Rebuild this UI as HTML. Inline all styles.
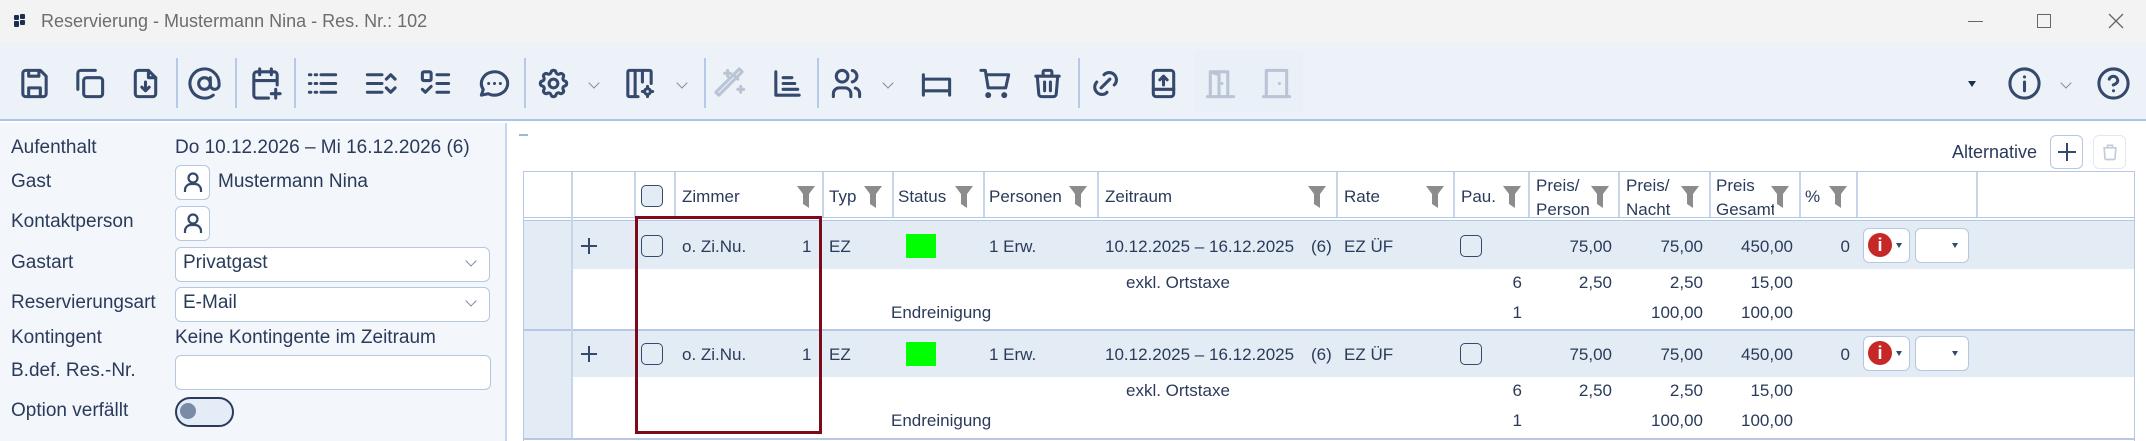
<!DOCTYPE html>
<html><head><meta charset="utf-8">
<style>
*{margin:0;padding:0;box-sizing:border-box}
body{width:2146px;height:441px;overflow:hidden;background:#fff;font-family:"Liberation Sans",sans-serif;color:#2a3b5a;position:relative}
.a{position:absolute}
.t{position:absolute;white-space:nowrap}
svg.i{position:absolute;width:35px;height:35px;top:66px;margin-left:-2px;fill:none;stroke:#34496b;stroke-width:2.1;stroke-linecap:round;stroke-linejoin:round}
svg.d{stroke:#b9c4d4}
.sep{position:absolute;top:58px;width:2px;height:50px;background:#b4cae6}
.chev{position:absolute;top:79px;width:8px;height:8px;border-right:1.3px solid #7b8aa3;border-bottom:1.3px solid #7b8aa3;transform:rotate(45deg)}
.lbl{position:absolute;left:11px;font-size:19px;color:#2a3b5a;white-space:nowrap}
.box{position:absolute;background:#fff;border:1.5px solid #b6c7e0;border-radius:6px}
.td{position:absolute;font-size:17px;white-space:nowrap;color:#2a3b5a}
.r{text-align:right}
.vl{position:absolute;width:1.5px;background:#c6d5ea}
.cb{position:absolute;width:22px;height:22px;border:1.6px solid #34496b;border-radius:5px}
.fl{position:absolute;top:186px;width:18px;height:22px}
</style></head><body>
<div class="a" style="left:0;top:0;width:2146px;height:42px;background:#f3f3f3"></div>
<div class="a" style="left:14px;top:15px;width:5px;height:5px;background:#1c2f4f;border-radius:1px"></div>
<div class="a" style="left:20px;top:14px;width:5px;height:5px;background:#1c2f4f;border-radius:1px"></div>
<div class="a" style="left:14px;top:21px;width:5px;height:6px;background:#1c2f4f;border-radius:1px"></div>
<div class="a" style="left:20px;top:20px;width:5px;height:5px;background:#1c2f4f;border-radius:1px"></div>
<div class="t" style="left:41px;top:11px;font-size:18px;color:#6d6d6d">Reservierung - Mustermann Nina - Res. Nr.: 102</div>
<div class="a" style="left:1968px;top:21px;width:15px;height:1.2px;background:#666"></div>
<div class="a" style="left:2037px;top:14px;width:14px;height:14px;border:1.3px solid #666"></div>
<svg class="a" style="left:2108px;top:13px" width="16" height="16"><path d="M1 1L15 15M15 1L1 15" stroke="#666" stroke-width="1.3"/></svg>
<div class="a" style="left:0;top:42px;width:2146px;height:79px;background:#edf2f9;border-bottom:2px solid #aac4e6"></div>
<div class="a" style="left:1195px;top:50px;width:108px;height:62px;background:#eaf0f7"></div>
<svg class="i" viewBox="0 0 24 24" style="left:19px"><path d="M4 5a2 2 0 0 1 2-2h10l4 4v12a2 2 0 0 1-2 2H6a2 2 0 0 1-2-2z"/><path d="M8 3v4h7V3M8 21v-6h8v6"/></svg>
<svg class="i" viewBox="0 0 24 24" style="left:74px"><rect x="8" y="8" width="13" height="13" rx="2"/><path d="M4 16V5a2 2 0 0 1 2-2h10"/></svg>
<svg class="i" viewBox="0 0 24 24" style="left:130px"><path d="M14 3H7a2 2 0 0 0-2 2v14a2 2 0 0 0 2 2h10a2 2 0 0 0 2-2V8z"/><path d="M14 3v5h5M12 11v6M9.5 14.5L12 17l2.5-2.5"/></svg>
<div class="sep" style="left:176px"></div>
<svg class="i" viewBox="0 0 24 24" style="left:189px"><circle cx="12" cy="12" r="4"/><path d="M16 8v5a3 3 0 0 0 6 0v-1a10 10 0 1 0-4 8"/></svg>
<div class="sep" style="left:235px"></div>
<svg class="i" viewBox="0 0 24 24" style="left:250px"><path d="M20 13V6a2 2 0 0 0-2-2H6a2 2 0 0 0-2 2v14a2 2 0 0 0 2 2h8M4 10h16M8 2v4M16 2v4M19 16v6M16 19h6"/></svg>
<div class="sep" style="left:294px"></div>
<svg class="i" viewBox="0 0 24 24" style="left:307px"><path d="M3 6h1M7 6h1M11 6h10M3 12h1M7 12h1M11 12h10M3 18h1M7 18h1M11 18h10"/></svg>
<svg class="i" viewBox="0 0 24 24" style="left:365px"><path d="M3 6h10M3 12h10M3 18h10M16 9l3-3 3 3M16 15l3 3 3-3"/></svg>
<svg class="i" viewBox="0 0 24 24" style="left:420px"><rect x="3" y="4" width="6" height="6" rx="1"/><path d="M13 6h8M13 12h8M3 16l2 2 4-4M13 18h8"/></svg>
<svg class="i" viewBox="0 0 24 24" style="left:479px"><path d="M3 20l1.3-3.9A9 8 0 1 1 7.7 19z"/><path d="M8 12h.01M12 12h.01M16 12h.01"/></svg>
<div class="sep" style="left:524px"></div>
<svg class="i" viewBox="0 0 24 24" style="left:538px"><circle cx="12" cy="12" r="3"/><path d="M10.3 4.3c.4-1.8 3-1.8 3.4 0a1.7 1.7 0 0 0 2.6 1.1c1.5-.9 3.300.8 2.4 2.4a1.7 1.7 0 0 0 1 2.5c1.8.4 1.8 3 0 3.4a1.7 1.7 0 0 0-1 2.6c.9 1.5-.9 3.3-2.4 2.4a1.7 1.7 0 0 0-2.6 1c-.4 1.8-3 1.8-3.4 0a1.7 1.7 0 0 0-2.5-1c-1.6.9-3.3-.9-2.4-2.4a1.7 1.7 0 0 0-1.1-2.6c-1.8-.4-1.8-3 0-3.4a1.7 1.7 0 0 0 1.1-2.5c-.9-1.6.8-3.3 2.4-2.4a1.7 1.7 0 0 0 2.5-1.1z"/></svg>
<div class="chev" style="left:590px"></div>
<svg class="i" viewBox="0 0 24 24" style="left:624px"><path d="M11 21H5a1 1 0 0 1-1-1V4a1 1 0 0 1 1-1h14a1 1 0 0 1 1 1v8M9 3v18M14 3v8"/><circle cx="17.5" cy="17.5" r="2"/><path d="M17.5 14v1.5M17.5 19.5V21M14 17.5h1.5M19.5 17.5H21"/></svg>
<div class="chev" style="left:678px"></div>
<div class="sep" style="left:704px"></div>
<svg class="i d" viewBox="0 0 24 24" style="left:715px"><path d="M4 20L20 4l-2-2L2 18zM15 7l2 2M10 3v4M8 5h4M19 14v4M17 16h4"/></svg>
<svg class="i" viewBox="0 0 24 24" style="left:772px"><path d="M4 4v16h16M9 8h6M9 12h8M9 16h10"/></svg>
<div class="sep" style="left:817px"></div>
<svg class="i" viewBox="0 0 24 24" style="left:831px"><circle cx="9" cy="7" r="4"/><path d="M3 21v-2a4 4 0 0 1 4-4h4a4 4 0 0 1 4 4v2M16 3.1a4 4 0 0 1 0 7.8M21 21v-2a4 4 0 0 0-3-3.9"/></svg>
<div class="chev" style="left:884px"></div>
<svg class="i" viewBox="0 0 24 24" style="left:921px"><path d="M3 6v14M3 9h18M3 17h18M21 9v11"/></svg>
<svg class="i" viewBox="0 0 24 24" style="left:980px"><circle cx="7" cy="20" r="1"/><circle cx="18" cy="20" r="1"/><path d="M2 3h3l2 12h12l2-9H6"/></svg>
<svg class="i" viewBox="0 0 24 24" style="left:1032px"><path d="M4 7h16M10 11v6M14 11v6M5 7l1 12a2 2 0 0 0 2 2h8a2 2 0 0 0 2-2l1-12M9 7V4a1 1 0 0 1 1-1h4a1 1 0 0 1 1 1v3"/></svg>
<div class="sep" style="left:1078px"></div>
<svg class="i" viewBox="0 0 24 24" style="left:1090px"><path d="M9 15l6-6M11 6l.5-.5a5 5 0 0 1 7 7l-.5.5M13 18l-.4.5a5 5 0 0 1-7-7L6 11"/></svg>
<svg class="i" viewBox="0 0 24 24" style="left:1148px"><rect x="5" y="3" width="14" height="18" rx="2"/><path d="M5 16h14M12 13V7M9.5 9.5L12 7l2.5 2.5"/></svg>
<svg class="i d" viewBox="0 0 24 24" style="left:1205px"><path d="M3 21h18M5 21V4h12v17M5 4l6 2v15M13 12h.01"/></svg>
<svg class="i d" viewBox="0 0 24 24" style="left:1261px"><path d="M3 21h18M5 21V3h14v18M14 12h.01"/></svg>
<div class="a" style="left:1968px;top:81px;border-left:4px solid transparent;border-right:4px solid transparent;border-top:6px solid #1c2f4f"></div>
<svg class="i" viewBox="0 0 24 24" style="left:2009px"><circle cx="12" cy="12" r="10"/><path d="M12 11v6M12 7.5h.01"/></svg>
<div class="chev" style="left:2062px;top:79px"></div>
<svg class="i" viewBox="0 0 24 24" style="left:2098px"><circle cx="12" cy="12" r="10"/><path d="M9.1 9a3 3 0 0 1 5.8 1c0 2-3 3-3 3M12 17h.01"/></svg>
<div class="a" style="left:0;top:123px;width:507px;height:318px;background:#f3f6fb;border-right:2px solid #c6d6ec"></div>
<div class="lbl" style="top:137px">Aufenthalt</div>
<div class="lbl" style="left:175px;top:137px">Do 10.12.2026 – Mi 16.12.2026 (6)</div>
<div class="lbl" style="top:171px">Gast</div>
<div class="box" style="left:175px;top:165px;width:35px;height:35px"></div>
<svg class="a" style="left:181px;top:170px" width="24" height="24" viewBox="0 0 24 24" fill="none" stroke="#34496b" stroke-width="2.2"><circle cx="12" cy="8" r="4.5"/><path d="M4 22v-2a6 6 0 0 1 6-6h4a6 6 0 0 1 6 6v2"/></svg>
<div class="lbl" style="left:218px;top:171px">Mustermann Nina</div>
<div class="lbl" style="top:211px">Kontaktperson</div>
<div class="box" style="left:175px;top:206px;width:35px;height:35px"></div>
<svg class="a" style="left:181px;top:211px" width="24" height="24" viewBox="0 0 24 24" fill="none" stroke="#34496b" stroke-width="2.2"><circle cx="12" cy="8" r="4.5"/><path d="M4 22v-2a6 6 0 0 1 6-6h4a6 6 0 0 1 6 6v2"/></svg>
<div class="lbl" style="top:252px">Gastart</div>
<div class="box" style="left:175px;top:247px;width:315px;height:35px"></div>
<div class="lbl" style="left:183px;top:252px">Privatgast</div>
<div class="chev" style="left:467px;top:257px"></div>
<div class="lbl" style="top:292px">Reservierungsart</div>
<div class="box" style="left:175px;top:287px;width:315px;height:35px"></div>
<div class="lbl" style="left:183px;top:292px">E-Mail</div>
<div class="chev" style="left:467px;top:297px"></div>
<div class="lbl" style="top:327px">Kontingent</div>
<div class="lbl" style="left:175px;top:327px">Keine Kontingente im Zeitraum</div>
<div class="lbl" style="top:360px">B.def. Res.-Nr.</div>
<div class="box" style="left:175px;top:355px;width:316px;height:35px"></div>
<div class="lbl" style="top:400px">Option verfällt</div>
<div class="a" style="left:175px;top:397px;width:59px;height:30px;border:2px solid #2a3b5a;border-radius:15px;background:#e4ecf7"></div>
<div class="a" style="left:180px;top:403px;width:16px;height:16px;border-radius:50%;background:#7a8ba6"></div>
<div class="a" style="left:519px;top:134px;width:9px;height:2px;background:#9fb6d8"></div>
<div class="t" style="left:1952px;top:142px;font-size:18px">Alternative</div>
<div class="box" style="left:2050px;top:135px;width:33px;height:34px;border-radius:6px"></div>
<svg class="a" style="left:2057px;top:142px" width="20" height="20"><path d="M10 1v18M1 10h18" stroke="#34496b" stroke-width="2"/></svg>
<div class="box" style="left:2093px;top:135px;width:33px;height:34px;border-color:#e2e8f0"></div>
<svg class="a" style="left:2100px;top:141px" width="20" height="22" viewBox="0 0 24 24" fill="none" stroke="#c3ccd9" stroke-width="2"><path d="M4 7h16M5 7l1 13a2 2 0 0 0 2 1h8a2 2 0 0 0 2-1l1-13M9 7V4h6v3"/></svg>
<div class="a" style="left:523px;top:171px;width:1612px;height:270px;border:1.5px solid #b6c9e4;border-bottom:none"></div>
<div class="a" style="left:523px;top:217px;width:1612px;height:4px;border-top:1.5px solid #b6c9e4;border-bottom:1.5px solid #b6c9e4"></div>
<div class="a" style="left:524px;top:221px;width:47px;height:108px;background:#e3ebf5"></div>
<div class="a" style="left:524px;top:331px;width:47px;height:107px;background:#e3ebf5"></div>
<div class="a" style="left:571px;top:221px;width:1563px;height:48px;background:#e3ebf5"></div>
<div class="a" style="left:571px;top:331px;width:1563px;height:46px;background:#e3ebf5"></div>
<div class="a" style="left:524px;top:329px;width:1610px;height:2px;background:#b6c9e4"></div>
<div class="a" style="left:524px;top:438px;width:1610px;height:2px;background:#b6c9e4"></div>
<div class="vl" style="left:571px;top:172px;height:266px"></div>
<div class="vl" style="left:634px;top:172px;height:45px"></div>
<div class="vl" style="left:674px;top:172px;height:45px"></div>
<div class="vl" style="left:822px;top:172px;height:45px"></div>
<div class="vl" style="left:892px;top:172px;height:45px"></div>
<div class="vl" style="left:983px;top:172px;height:45px"></div>
<div class="vl" style="left:1097px;top:172px;height:45px"></div>
<div class="vl" style="left:1336px;top:172px;height:45px"></div>
<div class="vl" style="left:1453px;top:172px;height:45px"></div>
<div class="vl" style="left:1528px;top:172px;height:45px"></div>
<div class="vl" style="left:1618px;top:172px;height:45px"></div>
<div class="vl" style="left:1709px;top:172px;height:45px"></div>
<div class="vl" style="left:1799px;top:172px;height:45px"></div>
<div class="vl" style="left:1856px;top:172px;height:45px"></div>
<div class="vl" style="left:1976px;top:172px;height:45px"></div>
<div class="cb" style="left:641px;top:185px;background:#e3ebf5"></div>
<div class="td" style="left:682px;top:187px">Zimmer</div>
<div class="td" style="left:829px;top:187px">Typ</div>
<div class="td" style="left:898px;top:187px">Status</div>
<div class="td" style="left:989px;top:187px">Personen</div>
<div class="td" style="left:1105px;top:187px">Zeitraum</div>
<div class="td" style="left:1344px;top:187px">Rate</div>
<div class="td" style="left:1461px;top:187px">Pau.</div>
<div class="td" style="left:1536px;top:174px;line-height:24px;width:60px;overflow:hidden">Preis/<br>Person</div>
<div class="td" style="left:1626px;top:174px;line-height:24px">Preis/<br>Nacht</div>
<div class="td" style="left:1716px;top:174px;line-height:24px;width:58px;overflow:hidden">Preis<br>Gesamt</div>
<div class="td" style="left:1805px;top:187px">%</div>
<svg style="display:none"><defs><path id="f" d="M0 0h18l-6 8v14l-6-4V8z" fill="#8c8c8c"/></defs></svg>
<svg class="fl" style="left:797px"><use href="#f"/></svg>
<svg class="fl" style="left:864px"><use href="#f"/></svg>
<svg class="fl" style="left:955px"><use href="#f"/></svg>
<svg class="fl" style="left:1069px"><use href="#f"/></svg>
<svg class="fl" style="left:1308px"><use href="#f"/></svg>
<svg class="fl" style="left:1426px"><use href="#f"/></svg>
<svg class="fl" style="left:1503px"><use href="#f"/></svg>
<svg class="fl" style="left:1591px"><use href="#f"/></svg>
<svg class="fl" style="left:1681px"><use href="#f"/></svg>
<svg class="fl" style="left:1771px"><use href="#f"/></svg>
<svg class="fl" style="left:1829px"><use href="#f"/></svg>
<svg class="a" style="left:580px;top:237px" width="18" height="18"><path d="M9 1v16M1 9h16" stroke="#34496b" stroke-width="2"/></svg>
<div class="cb" style="left:641px;top:235px"></div>
<div class="td" style="left:682px;top:237px">o. Zi.Nu.</div>
<div class="td" style="left:802px;top:237px">1</div>
<div class="td" style="left:829px;top:237px">EZ</div>
<div class="a" style="left:906px;top:234px;width:30px;height:24px;background:#00ff00"></div>
<div class="td" style="left:989px;top:237px">1 Erw.</div>
<div class="td" style="left:1105px;top:237px">10.12.2025 – 16.12.2025</div>
<div class="td" style="left:1311px;top:237px">(6)</div>
<div class="td" style="left:1344px;top:237px">EZ ÜF</div>
<div class="cb" style="left:1460px;top:235px"></div>
<div class="td r" style="left:1540px;top:237px;width:72px">75,00</div>
<div class="td r" style="left:1630px;top:237px;width:73px">75,00</div>
<div class="td r" style="left:1720px;top:237px;width:73px">450,00</div>
<div class="td r" style="left:1820px;top:237px;width:30px">0</div>
<div class="box" style="left:1863px;top:228px;width:47px;height:35px"></div>
<div class="a" style="left:1868px;top:233px;width:24px;height:24px;border-radius:50%;background:#c62828;color:#fff;font:bold 18px 'Liberation Sans';text-align:center;line-height:24px">i</div>
<div class="a" style="left:1896px;top:243px;border-left:3px solid transparent;border-right:3px solid transparent;border-top:5px solid #34496b"></div>
<div class="box" style="left:1915px;top:228px;width:54px;height:35px"></div>
<div class="a" style="left:1952px;top:243px;border-left:3px solid transparent;border-right:3px solid transparent;border-top:5px solid #34496b"></div>
<div class="td" style="left:1126px;top:273px">exkl. Ortstaxe</div>
<div class="td r" style="left:1480px;top:273px;width:42px">6</div>
<div class="td r" style="left:1540px;top:273px;width:72px">2,50</div>
<div class="td r" style="left:1630px;top:273px;width:73px">2,50</div>
<div class="td r" style="left:1720px;top:273px;width:73px">15,00</div>
<div class="td" style="left:891px;top:303px">Endreinigung</div>
<div class="td r" style="left:1480px;top:303px;width:42px">1</div>
<div class="td r" style="left:1630px;top:303px;width:73px">100,00</div>
<div class="td r" style="left:1720px;top:303px;width:73px">100,00</div>
<svg class="a" style="left:580px;top:345px" width="18" height="18"><path d="M9 1v16M1 9h16" stroke="#34496b" stroke-width="2"/></svg>
<div class="cb" style="left:641px;top:343px"></div>
<div class="td" style="left:682px;top:345px">o. Zi.Nu.</div>
<div class="td" style="left:802px;top:345px">1</div>
<div class="td" style="left:829px;top:345px">EZ</div>
<div class="a" style="left:906px;top:342px;width:30px;height:24px;background:#00ff00"></div>
<div class="td" style="left:989px;top:345px">1 Erw.</div>
<div class="td" style="left:1105px;top:345px">10.12.2025 – 16.12.2025</div>
<div class="td" style="left:1311px;top:345px">(6)</div>
<div class="td" style="left:1344px;top:345px">EZ ÜF</div>
<div class="cb" style="left:1460px;top:343px"></div>
<div class="td r" style="left:1540px;top:345px;width:72px">75,00</div>
<div class="td r" style="left:1630px;top:345px;width:73px">75,00</div>
<div class="td r" style="left:1720px;top:345px;width:73px">450,00</div>
<div class="td r" style="left:1820px;top:345px;width:30px">0</div>
<div class="box" style="left:1863px;top:336px;width:47px;height:35px"></div>
<div class="a" style="left:1868px;top:341px;width:24px;height:24px;border-radius:50%;background:#c62828;color:#fff;font:bold 18px 'Liberation Sans';text-align:center;line-height:24px">i</div>
<div class="a" style="left:1896px;top:351px;border-left:3px solid transparent;border-right:3px solid transparent;border-top:5px solid #34496b"></div>
<div class="box" style="left:1915px;top:336px;width:54px;height:35px"></div>
<div class="a" style="left:1952px;top:351px;border-left:3px solid transparent;border-right:3px solid transparent;border-top:5px solid #34496b"></div>
<div class="td" style="left:1126px;top:381px">exkl. Ortstaxe</div>
<div class="td r" style="left:1480px;top:381px;width:42px">6</div>
<div class="td r" style="left:1540px;top:381px;width:72px">2,50</div>
<div class="td r" style="left:1630px;top:381px;width:73px">2,50</div>
<div class="td r" style="left:1720px;top:381px;width:73px">15,00</div>
<div class="td" style="left:891px;top:411px">Endreinigung</div>
<div class="td r" style="left:1480px;top:411px;width:42px">1</div>
<div class="td r" style="left:1630px;top:411px;width:73px">100,00</div>
<div class="td r" style="left:1720px;top:411px;width:73px">100,00</div>
<div class="a" style="left:635px;top:216px;width:187px;height:218px;border:3px solid #7b0a1a"></div>
</body></html>
